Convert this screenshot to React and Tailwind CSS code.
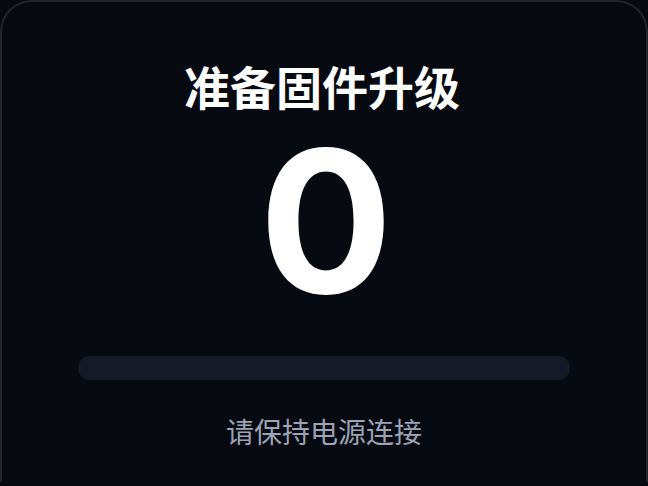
export default function App() {
  return (
    <div className="w-[648px] h-[486px] bg-[#080a12] overflow-hidden">
      <div
        className="w-[648px] h-[482px] rounded-t-[32px] border-2 border-b-0 border-[#22242f] bg-[#080a12] flex flex-col items-center"
        style={{ fontFamily: '"Noto Sans CJK SC", "Noto Sans", sans-serif' }}
      >
        <div className="mt-[60px] mr-[4px] text-[46px] leading-[46px] font-bold text-white">准备固件升级</div>
        <div
          className="mt-[33px] ml-[4px] h-[160px] text-[198px] leading-[160px] font-bold text-white"
          style={{ fontFamily: 'Inter, sans-serif' }}
        >
          0
        </div>
        <div className="mt-[55px] w-[492px] h-[24px] rounded-full bg-[#161a28]"></div>
        <div className="mt-[37px] text-[28px] leading-[28px] text-[#9ba3b4]">请保持电源连接</div>
      </div>
    </div>
  );
}
